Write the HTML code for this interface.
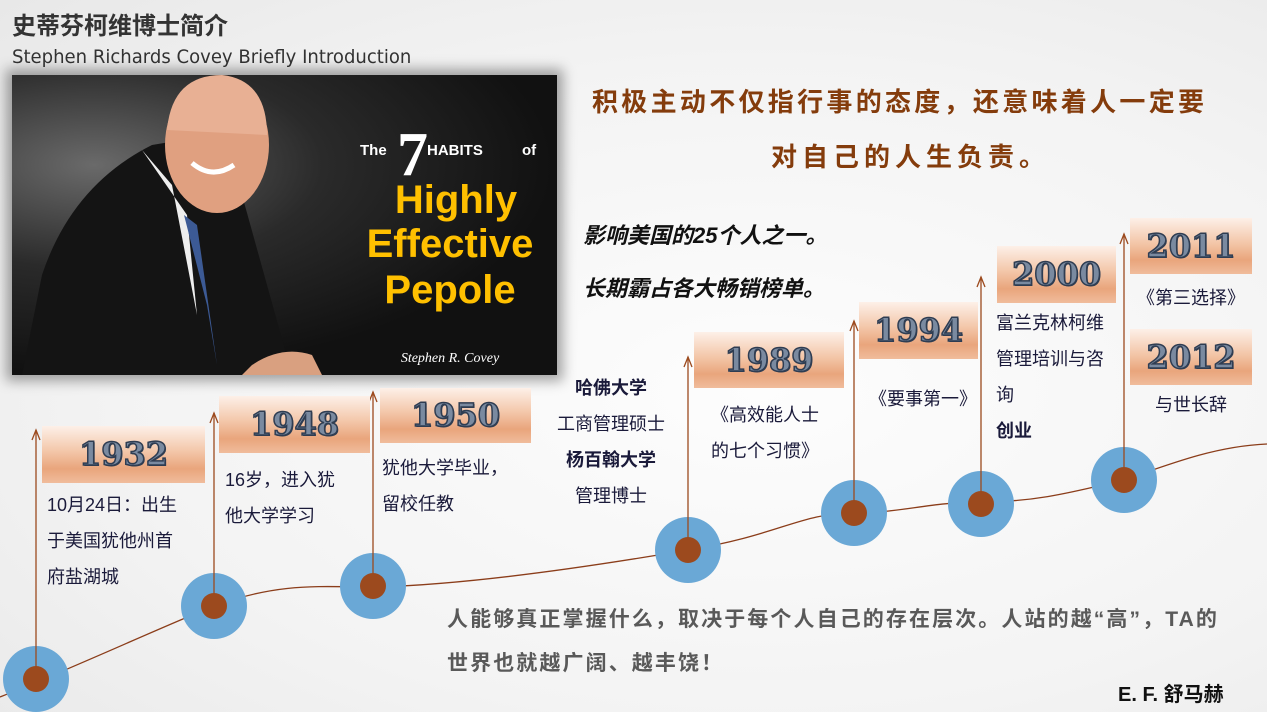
<!DOCTYPE html>
<html><head><meta charset="utf-8"><style>
*{margin:0;padding:0;box-sizing:border-box}
body{width:1267px;height:712px;overflow:hidden;position:relative;background:radial-gradient(ellipse at 60% 55%,#fdfdfd 0%,#f3f3f3 60%,#e8e8e8 100%);font-family:"Liberation Sans","Noto Sans CJK SC",sans-serif;}
.a{position:absolute;white-space:nowrap}
.yr{position:absolute;background:linear-gradient(#fdf0e8 0%,#f3c6a8 45%,#e9a57c 75%,#f0bc9c 100%);text-align:center;font-family:"DejaVu Serif",serif;font-weight:bold;color:#7a8aa0;-webkit-text-stroke:1.5px #2f3d52;text-shadow:1px 1px 0 #2f3d52;font-size:32px;letter-spacing:0px}
.t{position:absolute;font-size:18px;color:#1a1a3a;line-height:36px;white-space:nowrap}
.b{font-weight:bold}
</style></head><body>
<div class="a b" style="left:12px;top:6px;font-size:24px;color:#333;">史蒂芬柯维博士简介</div>
<div class="a" style="left:12px;top:46px;font-size:19px;color:#333;font-family:'DejaVu Sans',sans-serif;transform:scaleX(0.95);transform-origin:left">Stephen Richards Covey Briefly Introduction</div>
<div class="a" style="left:12px;top:75px;width:545px;height:300px;background:radial-gradient(ellipse at 15% 30%,#6a6a6a 0%,#2a2a2a 35%,#111 70%);box-shadow:0 0 12px 6px rgba(0,0,0,0.35);overflow:hidden">
<svg width="545" height="300" style="position:absolute;left:0;top:0">
<path d="M10 300 L30 200 Q60 110 140 70 L200 60 L230 120 L280 300 Z" fill="#141414"/>
<path d="M130 75 L175 140 L185 240 L160 110 Z" fill="#eee"/>
<path d="M172 140 L195 230 L205 290 L185 150 Z" fill="#3c5a95"/>
<ellipse cx="205" cy="70" rx="52" ry="68" fill="#e0a080"/>
<path d="M155 55 Q160 0 210 0 Q255 5 255 60 Z" fill="#e8b094"/>
<path d="M180 88 Q200 105 222 90" stroke="#fff" stroke-width="5" fill="none"/>
<path d="M240 290 Q270 270 300 280 L310 300 L230 300 Z" fill="#d9a080"/>
<text x="348" y="80" fill="#fff" font-family="Liberation Sans" font-weight="bold" font-size="15">The</text>
<text x="385" y="100" fill="#fff" font-family="Liberation Serif" font-weight="bold" font-size="62">7</text>
<text x="415" y="80" fill="#fff" font-family="Liberation Sans" font-weight="bold" font-size="15">HABITS</text>
<text x="510" y="80" fill="#fff" font-family="Liberation Sans" font-weight="bold" font-size="15">of</text>
<text x="444" y="138" fill="#ffc000" font-family="Liberation Sans" font-weight="bold" font-size="40" text-anchor="middle">Highly</text>
<text x="438" y="182" fill="#ffc000" font-family="Liberation Sans" font-weight="bold" font-size="40" text-anchor="middle">Effective</text>
<text x="438" y="228" fill="#ffc000" font-family="Liberation Sans" font-weight="bold" font-size="40" text-anchor="middle">Pepole</text>
<text x="438" y="287" fill="#fff" font-family="Liberation Serif" font-style="italic" font-size="14" text-anchor="middle">Stephen R. Covey</text>
</svg></div>
<div class="a b" style="left:592px;top:82px;font-size:26px;color:#843c0c;letter-spacing:3.3px">积极主动不仅指行事的态度，还意味着人一定要</div>
<div class="a b" style="left:771px;top:137px;font-size:26px;color:#843c0c;letter-spacing:5px">对自己的人生负责。</div>
<div class="a b" style="left:583px;top:218px;font-size:22px;color:#111;font-style:italic;letter-spacing:0px">影响美国的25个人之一。</div>
<div class="a b" style="left:583px;top:271px;font-size:22px;color:#111;font-style:italic;letter-spacing:0px">长期霸占各大畅销榜单。</div>
<svg class="a" style="left:0;top:0" width="1267" height="712">
<path d="M0 697 C80 665 150 632 214 606 C280 582 320 587 373 587 C470 585 600 565 688 550 C780 535 800 513 854 513 C900 513 930 502 981 502 C1040 502 1080 490 1124 480 C1180 460 1220 446 1267 444" fill="none" stroke="#8b3d1a" stroke-width="1.3"/>
<g fill="#6aa8d6">
<circle cx="36" cy="679" r="33"/><circle cx="214" cy="606" r="33"/><circle cx="373" cy="586" r="33"/><circle cx="688" cy="550" r="33"/><circle cx="854" cy="513" r="33"/><circle cx="981" cy="504" r="33"/><circle cx="1124" cy="480" r="33"/>
</g>
<g fill="#9c4a1e">
<circle cx="36" cy="679" r="13"/><circle cx="214" cy="606" r="13"/><circle cx="373" cy="586" r="13"/><circle cx="688" cy="550" r="13"/><circle cx="854" cy="513" r="13"/><circle cx="981" cy="504" r="13"/><circle cx="1124" cy="480" r="13"/>
</g>
<g stroke="#9c4a1e" stroke-width="1.3" fill="none">
<line x1="36" y1="430" x2="36" y2="679"/><path d="M32 440 L36 430 L40 440"/>
<line x1="214" y1="413" x2="214" y2="606"/><path d="M210 423 L214 413 L218 423"/>
<line x1="373" y1="392" x2="373" y2="586"/><path d="M369 402 L373 392 L377 402"/>
<line x1="688" y1="357" x2="688" y2="550"/><path d="M684 367 L688 357 L692 367"/>
<line x1="854" y1="321" x2="854" y2="513"/><path d="M850 331 L854 321 L858 331"/>
<line x1="981" y1="277" x2="981" y2="504"/><path d="M977 287 L981 277 L985 287"/>
<line x1="1124" y1="234" x2="1124" y2="480"/><path d="M1120 244 L1124 234 L1128 244"/>
</g>
</svg>
<div class="yr" style="left:42px;top:426px;width:163px;height:57px;line-height:57px">1932</div>
<div class="yr" style="left:219px;top:396px;width:151px;height:57px;line-height:57px">1948</div>
<div class="yr" style="left:380px;top:388px;width:151px;height:55px;line-height:55px">1950</div>
<div class="yr" style="left:694px;top:332px;width:150px;height:56px;line-height:56px">1989</div>
<div class="yr" style="left:859px;top:302px;width:119px;height:57px;line-height:57px">1994</div>
<div class="yr" style="left:997px;top:246px;width:119px;height:57px;line-height:57px">2000</div>
<div class="yr" style="left:1130px;top:218px;width:122px;height:56px;line-height:56px">2011</div>
<div class="yr" style="left:1130px;top:329px;width:122px;height:56px;line-height:56px">2012</div>
<div class="t" style="left:47px;top:487px">10月24日：出生<br>于美国犹他州首<br>府盐湖城</div>
<div class="t" style="left:225px;top:462px">16岁，进入犹<br>他大学学习</div>
<div class="t" style="left:382px;top:450px">犹他大学毕业，<br>留校任教</div>
<div class="t" style="left:551px;top:370px;text-align:center;width:120px"><span class="b">哈佛大学</span><br>工商管理硕士<br><span class="b">杨百翰大学</span><br>管理博士</div>
<div class="t" style="left:711px;top:397px">《高效能人士<br>的七个习惯》</div>
<div class="t" style="left:869px;top:381px">《要事第一》</div>
<div class="t" style="left:996px;top:305px">富兰克林柯维<br>管理培训与咨<br>询<br><span class="b">创业</span></div>
<div class="t" style="left:1130px;top:280px;width:122px;text-align:center">《第三选择》</div>
<div class="t" style="left:1130px;top:387px;width:122px;text-align:center">与世长辞</div>
<div class="a b" style="left:447px;top:603px;font-size:21px;color:#595959;letter-spacing:2.1px">人能够真正掌握什么，取决于每个人自己的存在层次。人站的越“高”，TA的</div>
<div class="a b" style="left:447px;top:647px;font-size:21px;color:#595959;letter-spacing:2.1px">世界也就越广阔、越丰饶！</div>
<div class="a b" style="left:1118px;top:678px;font-size:20px;color:#111">E. F. 舒马赫</div>
</body></html>
